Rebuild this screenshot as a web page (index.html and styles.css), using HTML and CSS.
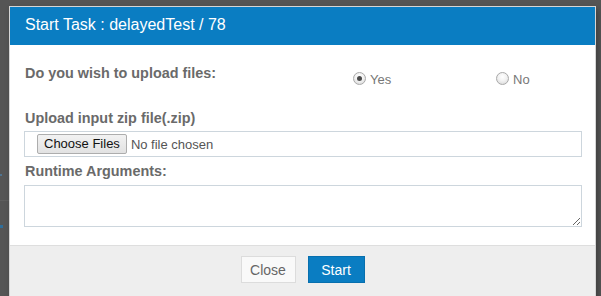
FILE: index.html
```html
<!DOCTYPE html>
<html>
<head>
<meta charset="utf-8">
<title>Start Task</title>
<link rel="stylesheet" href="styles.css">
</head>
<body>
<div class="backdrop">
  <span class="bg-mark bg-mark-a"></span>
  <span class="bg-mark bg-mark-b"></span>
  <span class="bg-mark bg-mark-c"></span>
</div>
<div class="overlay">
  <div class="dialog">
    <div class="dialog-header">Start Task : delayedTest / 78</div>
    <div class="dialog-body">
      <div class="row-upload">
        <div class="label label-question">Do you wish to upload files:</div>
        <div class="option option-yes">
          <span class="radio radio-checked"></span>
          <span class="option-text">Yes</span>
        </div>
        <div class="option">
          <span class="radio"></span>
          <span class="option-text">No</span>
        </div>
      </div>
      <div class="label label-file">Upload input zip file(.zip)</div>
      <div class="file-box">
        <span class="file-button">Choose Files</span>
        <span class="file-status">No file chosen</span>
      </div>
      <div class="label label-args">Runtime Arguments:</div>
      <textarea class="args"></textarea>
    </div>
    <div class="dialog-footer">
      <button class="btn btn-close">Close</button>
      <button class="btn btn-start">Start</button>
    </div>
  </div>
</div>
</body>
</html>
```
FILE: styles.css
```css
html, body {
  margin: 0;
  padding: 0;
}
body {
  width: 601px;
  height: 296px;
  overflow: hidden;
  background: #555555;
  font-family: "Liberation Sans", Arial, sans-serif;
  position: relative;
}
.backdrop {
  position: absolute;
  inset: 0;
}
.bg-mark {
  position: absolute;
  display: block;
}
.bg-mark-a {
  left: 0;
  top: 225px;
  width: 3px;
  height: 3px;
  background: #2f6e9a;
}
.bg-mark-b {
  left: 0;
  top: 174px;
  width: 2px;
  height: 2px;
  background: #4f7390;
}
.bg-mark-c {
  left: 0;
  top: 200px;
  width: 9px;
  height: 1px;
  background: #5e5e5e;
}
.overlay {
  position: relative;
  padding: 6px 0 0 9px;
}
.dialog {
  width: 585px;
  border: 1px solid #d6d6d6;
  background: #ffffff;
  box-shadow: 2px 3px 6px rgba(0, 0, 0, 0.28);
}
.dialog-header {
  height: 38px;
  box-sizing: border-box;
  padding: 8px 15px 0;
  background: #0a7dc2;
  color: #ffffff;
  font-size: 16px;
  line-height: 20px;
}
.dialog-body {
  padding: 18px 13px 18px 14px;
}
.label {
  font-size: 14.4px;
  font-weight: bold;
  color: #6a6a6a;
  line-height: 20px;
  padding-left: 1px;
}
.row-upload {
  display: flex;
  align-items: flex-start;
  height: 20px;
  margin-bottom: 25px;
}
.label-question {
  width: 328px;
  flex-shrink: 0;
}
.option {
  display: flex;
  align-items: center;
  margin-top: 7px;
}
.option-yes {
  width: 143px;
  flex-shrink: 0;
}
.radio {
  width: 11px;
  height: 11px;
  border-radius: 50%;
  border: 1px solid #a9a9a9;
  background: radial-gradient(circle at 50% 35%, #ffffff 0%, #f2f2f2 45%, #d4d4d4 100%);
  display: flex;
  align-items: center;
  justify-content: center;
  box-sizing: content-box;
}
.radio-checked::after {
  content: "";
  width: 5px;
  height: 5px;
  border-radius: 50%;
  background: #4a4a4a;
}
.option-text {
  margin-left: 4px;
  font-size: 13px;
  color: #777777;
  line-height: 15px;
  padding-top: 2px;
}
.label-file {
  margin-bottom: 3px;
}
.file-box {
  height: 26px;
  box-sizing: border-box;
  border: 1px solid #cdd6dd;
  padding-left: 12px;
  display: flex;
  align-items: center;
}
.file-button {
  height: 20px;
  box-sizing: border-box;
  padding: 0 6px;
  border: 1px solid #adadad;
  border-radius: 2px;
  background: linear-gradient(#f2f2f2, #e2e2e2);
  font-size: 13px;
  line-height: 18px;
  color: #111111;
}
.file-status {
  margin-left: 4px;
  font-size: 13px;
  color: #555555;
}
.label-args {
  margin-top: 4px;
  margin-bottom: 4px;
}
.args {
  display: block;
  width: 100%;
  height: 42px;
  box-sizing: border-box;
  margin: 0;
  border: 1px solid #cdd6dd;
  border-radius: 0;
  resize: both;
  font-family: "Liberation Sans", Arial, sans-serif;
  outline: none;
}
.dialog-footer {
  height: 46px;
  border-top: 1px solid #dedede;
  background: #eeeeee;
  display: flex;
  justify-content: center;
  align-items: flex-start;
  gap: 12px;
  padding-top: 10px;
  box-sizing: content-box;
}
.btn {
  height: 27px;
  box-sizing: border-box;
  font-family: "Liberation Sans", Arial, sans-serif;
  font-size: 14px;
  padding: 0;
  border-radius: 0;
  cursor: pointer;
}
.btn-close {
  width: 55px;
  background: #f9f9f9;
  border: 1px solid #dcdcdc;
  color: #666666;
}
.btn-start {
  width: 57px;
  background: #0a7dc2;
  border: 1px solid #076fae;
  color: #ffffff;
}
```
